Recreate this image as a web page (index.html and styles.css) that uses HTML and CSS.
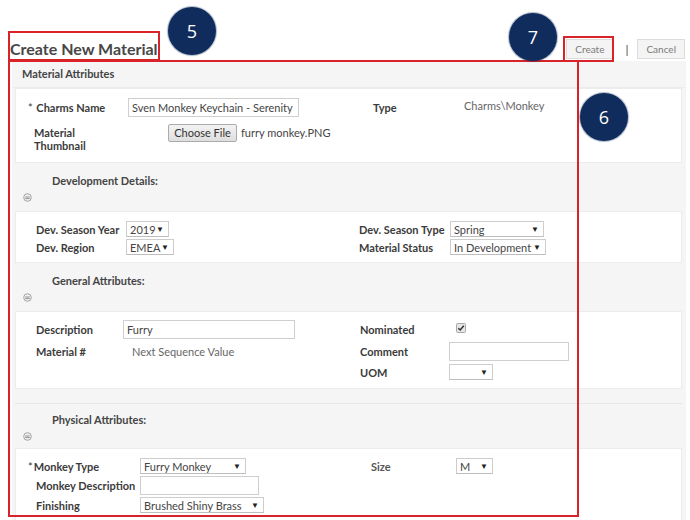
FILE: index.html
```html
<!DOCTYPE html>
<html>
<head>
<meta charset="utf-8">
<link rel="stylesheet" href="styles.css">
</head>
<body>
<div class="page">
  <header class="top">
    <h1 class="title">Create New Material</h1>
    <div class="actions">
      <button class="btn">Create</button>
      <span class="sep">|</span>
      <button class="btn">Cancel</button>
    </div>
  </header>

  <main class="panel">
    <div class="sec-head">Material Attributes</div>
    <section class="card card1">
      <div class="lbl"><span class="req">*</span> Charms Name</div>
      <div><div class="input w-charms">Sven Monkey Keychain - Serenity</div></div>
      <div class="lbl">Type</div>
      <div class="val">Charms\Monkey</div>
      <div class="lbl lbl-2line">Material<br>Thumbnail</div>
      <div class="file"><button class="choose">Choose File</button><span class="fname">furry monkey.PNG</span></div>
      <div></div><div></div>
    </section>

    <div class="sec-head-c">
      <div class="sec-title">Development Details:</div>
      <svg class="collapse" width="9" height="9" viewBox="0 0 9 9"><circle cx="4.5" cy="4.5" r="3.8" fill="#f2f2f2" stroke="#9a9a9a" stroke-width="0.9"/><line x1="2.3" y1="4" x2="6.7" y2="4" stroke="#777" stroke-width="0.8"/><line x1="2.3" y1="5.6" x2="6.7" y2="5.6" stroke="#777" stroke-width="0.8"/></svg>
    </div>
    <section class="card card2">
      <div class="lbl">Dev. Season Year</div>
      <div><div class="select w43"><span>2019</span><span class="arr">▼</span></div></div>
      <div class="lbl">Dev. Season Type</div>
      <div><div class="select w94"><span>Spring</span><span class="arr">▼</span></div></div>
      <div class="lbl">Dev. Region</div>
      <div><div class="select w48"><span>EMEA</span><span class="arr">▼</span></div></div>
      <div class="lbl">Material Status</div>
      <div><div class="select w96"><span>In Development</span><span class="arr">▼</span></div></div>
    </section>

    <div class="sec-head-c">
      <div class="sec-title">General Attributes:</div>
      <svg class="collapse" width="9" height="9" viewBox="0 0 9 9"><circle cx="4.5" cy="4.5" r="3.8" fill="#f2f2f2" stroke="#9a9a9a" stroke-width="0.9"/><line x1="2.3" y1="4" x2="6.7" y2="4" stroke="#777" stroke-width="0.8"/><line x1="2.3" y1="5.6" x2="6.7" y2="5.6" stroke="#777" stroke-width="0.8"/></svg>
    </div>
    <section class="card card3">
      <div class="lbl">Description</div>
      <div><div class="input w-desc">Furry</div></div>
      <div class="lbl">Nominated</div>
      <div class="chk-cell"><svg width="10" height="10" viewBox="0 0 10 10"><rect x="0.5" y="0.5" width="9" height="9" rx="1" fill="#e6e6e6" stroke="#a8a8a8"/><path d="M2.3 5.2 L4.2 7 L7.8 2.8" fill="none" stroke="#333" stroke-width="1.5"/></svg></div>
      <div class="lbl">Material #</div>
      <div class="val seq">Next Sequence Value</div>
      <div class="lbl">Comment</div>
      <div><div class="input w-comment"></div></div>
      <div></div><div></div>
      <div class="lbl">UOM</div>
      <div><div class="select w44"><span></span><span class="arr">▼</span></div></div>
    </section>

    <div class="gap-strip"></div>

    <div class="sec-head-c phys">
      <div class="sec-title">Physical Attributes:</div>
      <svg class="collapse" width="9" height="9" viewBox="0 0 9 9"><circle cx="4.5" cy="4.5" r="3.8" fill="#f2f2f2" stroke="#9a9a9a" stroke-width="0.9"/><line x1="2.3" y1="4" x2="6.7" y2="4" stroke="#777" stroke-width="0.8"/><line x1="2.3" y1="5.6" x2="6.7" y2="5.6" stroke="#777" stroke-width="0.8"/></svg>
    </div>
    <section class="card card4">
      <div class="lbl"><span class="req">*</span>Monkey Type</div>
      <div><div class="select w106"><span>Furry Monkey</span><span class="arr">▼</span></div></div>
      <div class="lbl lbl-plain">Size</div>
      <div><div class="select w37"><span>M</span><span class="arr">▼</span></div></div>
      <div class="lbl ind">Monkey Description</div>
      <div><div class="input w-mdesc"></div></div>
      <div></div><div></div>
      <div class="lbl ind">Finishing</div>
      <div><div class="select w124"><span>Brushed Shiny Brass</span><span class="arr">▼</span></div></div>
      <div></div><div></div>
    </section>
  </main>

  <div class="mark mark-title"></div>
  <div class="mark mark-create"></div>
  <div class="mark mark-panel"></div>
  <div class="badge b5">5</div>
  <div class="badge b7">7</div>
  <div class="badge b6">6</div>
</div>
</body>
</html>
```

FILE: styles.css
```css
* { box-sizing: border-box; }
html, body { margin: 0; padding: 0; background: #fff; }
body {
  font-family: Lato, "Open Sans", "Liberation Sans", sans-serif;
  color: #3b3b3b;
  width: 690px;
  height: 520px;
  overflow: hidden;
}
.page { position: relative; width: 690px; height: 520px; }

.top {
  height: 61px;
  display: flex;
  justify-content: space-between;
  align-items: flex-end;
  padding: 0 5px 0 10px;
}
.title {
  margin: 0 0 3px 0;
  font-size: 16px;
  line-height: 18px;
  font-weight: 700;
  color: #474747;
}
.actions { display: flex; align-items: center; margin-bottom: 2px; }
.btn {
  font-family: inherit;
  font-size: 10px;
  color: #7a7a7a;
  background: #f4f4f4;
  border: 1px solid #dcdcdc;
  height: 20px;
  padding: 0 8px;
  margin: 0;
}
.sep { font-size: 12px; color: #444; margin: 0 9px 0 12px; }

.panel {
  margin-left: 12px;
  width: 674px;
  background: #f5f5f5;
  padding-bottom: 10px;
}
.sec-head {
  height: 27px;
  padding: 6px 0 0 10px;
  font-size: 11px;
  font-weight: 700;
  color: #444;
  border-bottom: 1px solid #ececec;
}
.sec-head-c {
  height: 48px;
  padding-top: 11px;
}
.sec-head-c.phys { height: 44px; padding-top: 9px; }
.sec-title {
  padding-left: 40px;
  font-size: 11px;
  font-weight: 700;
  line-height: 14px;
  color: #444;
}
.collapse { display: block; margin: 5px 0 0 11px; }

.card {
  margin: 0 4px 0 3px;
  background: #fff;
  border: 1px solid #ececec;
  display: grid;
  align-items: center;
  row-gap: 2px;
}
.lbl {
  font-size: 11px;
  font-weight: 700;
  color: #3b3b3b;
  white-space: nowrap;
}
.req { font-weight: 400; margin-right: 1px; }
.val { font-size: 11px; color: #666; }
.seq { padding-left: 9px; }

.card1 {
  grid-template-columns: 100px 245px 91px auto;
  padding: 9px 0 9px 12px;
  row-gap: 5px;
  align-items: start;
  height: 75px;
}
.card1 .lbl, .card1 .val { line-height: 19px; }
.card1 .lbl-2line { line-height: 13px; margin-left: 6px; padding-top: 2px; }
.card1 .val { margin-top: -2px; }
.file { display: flex; align-items: center; padding-left: 40px; }
.choose {
  font-family: inherit;
  font-size: 11px;
  color: #333;
  height: 18px;
  width: 69px;
  padding: 0;
  margin: 0;
  background: linear-gradient(#f3f3f3, #dedede);
  border: 1px solid #ababab;
  border-radius: 2px;
}
.fname { font-size: 11px; color: #444; margin-left: 4px; }

.card2 {
  grid-template-columns: 90px 233px 91px auto;
  padding: 9px 0 7px 20px;
  height: 52px;
}
.card3 {
  grid-template-columns: 87px 237px 89px auto;
  padding: 8px 0 8px 20px;
  row-gap: 3px;
  height: 78px;
}
.chk-cell { display: flex; padding-left: 7px; margin-top: -3px; }
.card4 {
  grid-template-columns: 112px 231px 85px auto;
  padding: 9px 0 8px 12px;
  row-gap: 2px;
}
.card4 .ind { margin-left: 8px; }
.lbl-plain { font-weight: 700; color: #555; }

.input {
  height: 19px;
  border: 1px solid #cfcfcf;
  background: #fff;
  font-size: 11px;
  color: #444;
  line-height: 17px;
  padding-left: 3px;
  white-space: nowrap;
  overflow: hidden;
}
.w-charms { width: 171px; }
.w-desc { width: 172px; }
.w-comment { width: 120px; }
.w-mdesc { width: 119px; }

.select {
  height: 16px;
  border: 1px solid #cdcdcd;
  border-bottom-color: #bdbdbd;
  background: #fff;
  display: flex;
  justify-content: space-between;
  align-items: center;
  font-size: 11px;
  color: #444;
  padding: 0 4px 0 3px;
  white-space: nowrap;
}
.arr { font-size: 8px; color: #222; }
.w43 { width: 43px; }
.w48 { width: 48px; }
.w94 { width: 94px; }
.w96 { width: 96px; }
.w44 { width: 44px; }
.w37 { width: 37px; }
.w106 { width: 106px; }
.w124 { width: 124px; }

.gap-strip {
  height: 15px;
  border-bottom: 1px solid #e6e6e6;
  margin: 0 4px 0 3px;
  padding-top: 7px;
}

.mark { position: absolute; border: 2px solid #d8232a; }
.mark-title { left: 8px; top: 31px; width: 152px; height: 30px; }
.mark-create { left: 563px; top: 36px; width: 51px; height: 26px; }
.mark-panel { left: 8px; top: 60px; width: 571px; height: 457px; }

.badge {
  position: absolute;
  width: 48px;
  height: 48px;
  border-radius: 50%;
  background: #0f2c5c;
  box-shadow: 0 0 1px 1px rgba(15,44,92,0.35);
  color: #fff;
  font-family: "Open Sans", "Liberation Sans", sans-serif;
  font-size: 18px;
  display: flex;
  align-items: center;
  justify-content: center;
}
.b5 { left: 168px; top: 7px; }
.b7 { left: 509px; top: 13px; }
.b6 { left: 580px; top: 93px; }
```
